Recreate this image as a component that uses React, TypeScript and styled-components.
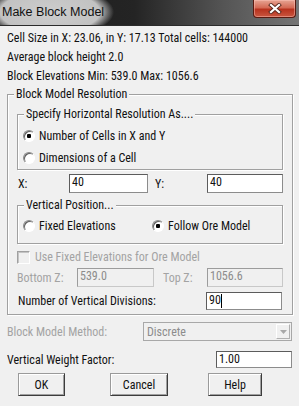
import React from 'react';
import styled, { createGlobalStyle } from 'styled-components';

const FONT = `'Roboto Condensed', 'Liberation Sans', Arial, sans-serif`;
const DISABLED = '#a3a3a3';

const Global = createGlobalStyle`
  html, body { margin: 0; padding: 0; background: #f0f0f0; }
  body { font-family: ${FONT}; font-size: 12px; color: #111; }
  * { box-sizing: border-box; }
`;

const Window = styled.div`
  width: 299px;
  height: 406px;
  overflow: hidden;
  background: #f0f0f0;
  display: flex;
  flex-direction: column;
`;

const TitleBar = styled.div`
  height: 26px;
  flex: none;
  display: flex;
  align-items: flex-start;
  justify-content: space-between;
  background:
    radial-gradient(64px 26px at 50px 12px, #cdcdcd 0%, #c2c2c2 78%, rgba(194, 194, 194, 0) 100%),
    linear-gradient(to right, #1c1c1c 0%, #242424 45%, #555 75%, #757575 100%);
  border-bottom: 1px solid #2b2b2b;
`;

const Title = styled.span`
  font-family: 'Liberation Sans', Arial, sans-serif;
  font-size: 12.5px;
  line-height: 25px;
  padding-left: 2px;
  color: #111;
`;

const CloseButton = styled.div`
  width: 43px;
  height: 18px;
  margin-right: 3px;
  border: 1px solid #5a1a10;
  border-top: none;
  border-radius: 0 0 4px 4px;
  background: linear-gradient(#e6a493 0%, #d46a55 45%, #b8321e 55%, #c9563f 100%);
  box-shadow: inset 0 0 0 1px rgba(255, 200, 190, 0.45);
  display: flex;
  align-items: center;
  justify-content: center;
`;

const Body = styled.div`
  flex: 1;
  display: flex;
  flex-direction: column;
  padding: 3px 6px 0 7px;
`;

const InfoLine = styled.div`
  height: 19px;
  line-height: 19px;
  white-space: nowrap;
`;

const GroupTitle = styled.span`
  align-self: flex-start;
  height: 15px;
  line-height: 15px;
  margin-top: -8px;
  padding: 0 2px;
  background: #f0f0f0;
  white-space: nowrap;
`;

const GroupBox = styled.div<{ $pl: number; $pr?: number; $pb?: number; $mt: number }>`
  display: flex;
  flex-direction: column;
  margin-top: ${(p) => p.$mt}px;
  padding: 0 ${(p) => p.$pr ?? 0}px ${(p) => p.$pb ?? 0}px ${(p) => p.$pl}px;
  border: 1px solid #a0a0a0;
  box-shadow: inset 1px 1px 0 #fff, 1px 1px 0 #fff;
  & > ${GroupTitle} {
    margin-left: ${(p) => 6 - p.$pl}px;
  }
`;

const RadioList = styled.div<{ $mt: number }>`
  display: flex;
  flex-direction: column;
  margin-top: ${(p) => p.$mt}px;
`;

const RadioRowH = styled.div<{ $mt: number }>`
  display: flex;
  margin-top: ${(p) => p.$mt}px;
`;

const RadioOption = styled.div<{ $w?: number }>`
  display: flex;
  align-items: center;
  gap: 4px;
  height: 22px;
  width: ${(p) => (p.$w ? `${p.$w}px` : 'auto')};
  white-space: nowrap;
`;

const RadioCircle = styled.span<{ $checked?: boolean }>`
  width: 12px;
  height: 12px;
  flex: none;
  border-radius: 50%;
  border: 1px solid;
  border-color: #8a8a8a #fff #fff #8a8a8a;
  background: #fff;
  box-shadow: inset 1px 1px 0 #5e5e5e;
  display: flex;
  align-items: center;
  justify-content: center;
  &::after {
    content: '';
    width: 4px;
    height: 4px;
    border-radius: 1px;
    background: ${(p) => (p.$checked ? '#000' : 'transparent')};
  }
`;

const FieldRow = styled.div<{ $mt: number; $h: number }>`
  display: flex;
  align-items: center;
  margin-top: ${(p) => p.$mt}px;
  height: ${(p) => p.$h}px;
  flex: none;
`;

const FieldLabel = styled.span<{ $w: number; $pl?: number; $disabled?: boolean }>`
  width: ${(p) => p.$w}px;
  padding-left: ${(p) => p.$pl ?? 0}px;
  flex: none;
  white-space: nowrap;
  color: ${(p) => (p.$disabled ? DISABLED : '#111')};
`;

const TextBox = styled.div<{ $w: number; $disabled?: boolean }>`
  width: ${(p) => p.$w}px;
  height: 100%;
  flex: none;
  display: flex;
  align-items: flex-start;
  padding: 0 2px;
  line-height: 15px;
  border: 1px solid;
  border-color: ${(p) => (p.$disabled ? '#9c9c9c #c8c8c8 #c8c8c8 #9c9c9c' : '#5c5c5c #8c8c8c #8c8c8c #5c5c5c')};
  background: ${(p) => (p.$disabled ? '#f0f0f0' : '#fff')};
  color: ${(p) => (p.$disabled ? '#8c8c8c' : '#111')};
`;

const Caret = styled.span`
  display: inline-block;
  width: 1px;
  height: 14px;
  margin-top: 1px;
  background: #000;
`;

const CheckRow = styled.div<{ $mt: number }>`
  display: flex;
  align-items: center;
  gap: 5px;
  height: 18px;
  margin-top: ${(p) => p.$mt}px;
  color: ${DISABLED};
  white-space: nowrap;
`;

const CheckBox = styled.span`
  width: 13px;
  height: 13px;
  flex: none;
  border: 1px solid;
  border-color: #a0a0a0 #fff #fff #a0a0a0;
  background: #f0f0f0;
  box-shadow: inset 1px 1px 0 #c4c4c4;
`;

const Combo = styled.div<{ $w: number }>`
  width: ${(p) => p.$w}px;
  height: 100%;
  flex: none;
  display: flex;
  align-items: center;
  justify-content: space-between;
  border: 1px solid #a8a8a8;
  background: #f0f0f0;
  color: #8c8c8c;
  padding-left: 3px;
`;

const ComboArrow = styled.span`
  width: 14px;
  height: 15px;
  margin-right: 1px;
  border: 1px solid;
  border-color: #fff #b0b0b0 #b0b0b0 #fff;
  background: #f0f0f0;
  display: flex;
  align-items: center;
  justify-content: center;
`;

const ButtonRow = styled.div<{ $mt: number }>`
  display: flex;
  margin-top: ${(p) => p.$mt}px;
  padding-left: 11px;
  height: 23px;
`;

const Button = styled.div<{ $w: number; $ml?: number }>`
  width: ${(p) => p.$w}px;
  margin-left: ${(p) => p.$ml ?? 0}px;
  height: 23px;
  flex: none;
  display: flex;
  align-items: center;
  justify-content: center;
  border: 1px solid;
  border-color: #9a9a9a #3c3c3c #3c3c3c #9a9a9a;
  box-shadow: inset 1px 1px 0 #fff, inset -1px -1px 0 #a0a0a0;
  background: #f0f0f0;
  color: #111;
`;

export default function App() {
  return (
    <>
      <Global />
      <Window>
        <TitleBar>
          <Title>Make Block Model</Title>
          <CloseButton>
            <svg width="14" height="11" viewBox="0 0 14 11">
              <path d="M3 2 L11 9 M11 2 L3 9" stroke="#5a2a20" strokeWidth="4" strokeLinecap="square" />
              <path d="M3 2 L11 9 M11 2 L3 9" stroke="#fff" strokeWidth="2.2" strokeLinecap="square" />
            </svg>
          </CloseButton>
        </TitleBar>
        <Body>
          <InfoLine>Cell Size in X: 23.06, in Y: 17.13 Total cells: 144000</InfoLine>
          <InfoLine>Average block height 2.0</InfoLine>
          <InfoLine>Block Elevations Min: 539.0 Max: 1056.6</InfoLine>

          <GroupBox $mt={8} $pl={9} $pr={9} $pb={4}>
            <GroupTitle>Block Model Resolution</GroupTitle>

            <GroupBox $mt={12} $pl={5}>
              <GroupTitle>Specify Horizontal Resolution As....</GroupTitle>
              <RadioList $mt={3}>
                <RadioOption>
                  <RadioCircle $checked />
                  Number of Cells in X and Y
                </RadioOption>
                <RadioOption>
                  <RadioCircle />
                  Dimensions of a Cell
                </RadioOption>
              </RadioList>
            </GroupBox>

            <FieldRow $mt={4} $h={19}>
              <FieldLabel $w={52} $pl={1}>X:</FieldLabel>
              <TextBox $w={79}>40</TextBox>
              <FieldLabel $w={59} $pl={7}>Y:</FieldLabel>
              <TextBox $w={76}>40</TextBox>
            </FieldRow>

            <GroupBox $mt={12} $pl={5} $pb={6}>
              <GroupTitle>Vertical Position...</GroupTitle>
              <RadioRowH $mt={2}>
                <RadioOption $w={129}>
                  <RadioCircle />
                  Fixed Elevations
                </RadioOption>
                <RadioOption>
                  <RadioCircle $checked />
                  Follow Ore Model
                </RadioOption>
              </RadioRowH>
            </GroupBox>

            <CheckRow $mt={4}>
              <CheckBox />
              Use Fixed Elevations for Ore Model
            </CheckRow>

            <FieldRow $mt={2} $h={19}>
              <FieldLabel $w={60} $disabled>Bottom Z:</FieldLabel>
              <TextBox $w={77} $disabled>539.0</TextBox>
              <FieldLabel $w={53} $pl={9} $disabled>Top Z:</FieldLabel>
              <TextBox $w={76} $disabled>1056.6</TextBox>
            </FieldRow>

            <FieldRow $mt={5} $h={18}>
              <FieldLabel $w={189} $pl={1}>Number of Vertical Divisions:</FieldLabel>
              <TextBox $w={76}>
                90
                <Caret />
              </TextBox>
            </FieldRow>
          </GroupBox>

          <FieldRow $mt={7} $h={19}>
            <FieldLabel $w={136} $disabled>Block Model Method:</FieldLabel>
            <Combo $w={149}>
              Discrete
              <ComboArrow>
                <svg width="7" height="4" viewBox="0 0 7 4">
                  <path d="M0 0 H7 L3.5 4 Z" fill="#a8a8a8" />
                </svg>
              </ComboArrow>
            </Combo>
          </FieldRow>

          <FieldRow $mt={10} $h={17}>
            <FieldLabel $w={209}>Vertical Weight Factor:</FieldLabel>
            <TextBox $w={76}>1.00</TextBox>
          </FieldRow>

          <ButtonRow $mt={5}>
            <Button $w={47}>OK</Button>
            <Button $w={58} $ml={45}>Cancel</Button>
            <Button $w={54} $ml={40}>Help</Button>
          </ButtonRow>
        </Body>
      </Window>
    </>
  );
}
